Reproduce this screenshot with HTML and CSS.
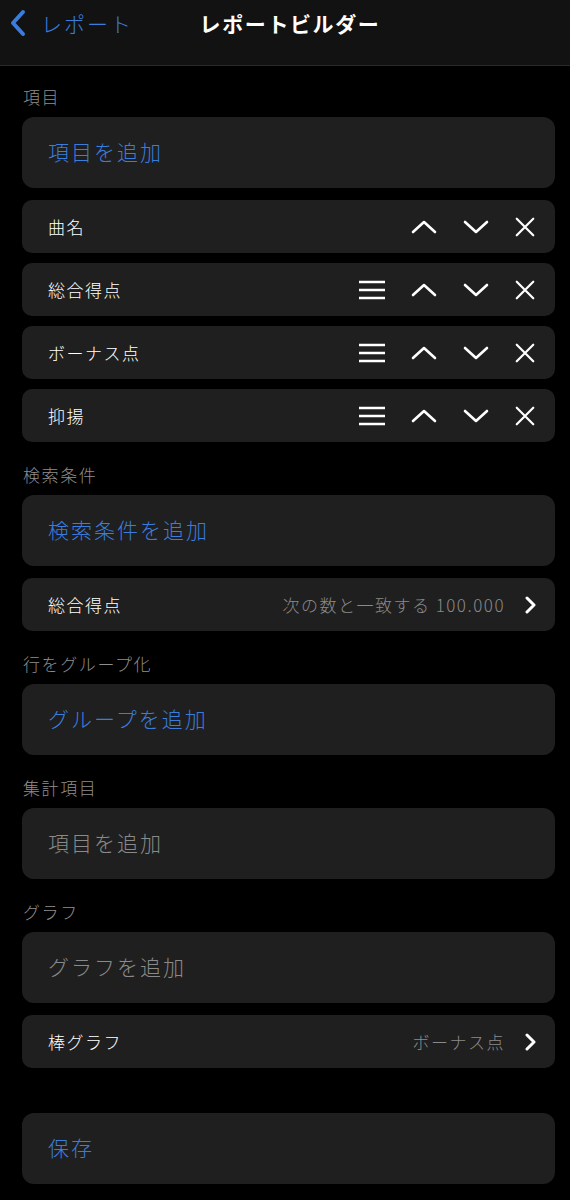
FILE: index.html
```html
<!DOCTYPE html>
<html lang="ja">
<head>
<meta charset="UTF-8">
<meta name="viewport" content="width=device-width, initial-scale=1.0">
<title>レポートビルダー</title>
<link rel="stylesheet" href="styles.css">
</head>
<body>
    <header class="nav">
        <a href="#" class="back">
            <svg width="16" height="28" viewBox="0 0 16 28"><polyline points="13,3 3,14 13,25" fill="none" stroke="currentColor" stroke-width="4" stroke-linecap="round" stroke-linejoin="round"/></svg>
            <span>レポート</span>
        </a>
        <h1>レポートビルダー</h1>
        <div></div>
    </header>

    <main class="content">
        <section class="section">
            <h2>項目</h2>
            <div class="card action">項目を追加</div>
            <div class="rows">
                <div class="row">
                    <span class="label">曲名</span>
                    <div class="tools">
                        <svg class="ico" width="28" height="16" viewBox="0 0 28 16"><polyline points="3,13 14,3 25,13"/></svg>
                        <svg class="ico" width="28" height="16" viewBox="0 0 28 16"><polyline points="3,3 14,13 25,3"/></svg>
                        <svg class="ico close" width="24" height="24" viewBox="0 0 24 24"><path d="M3 3 L21 21 M21 3 L3 21"/></svg>
                    </div>
                </div>
                <div class="row">
                    <span class="label">総合得点</span>
                    <div class="tools">
                        <svg class="ico menu" width="28" height="20" viewBox="0 0 28 20"><path d="M1 2 H27 M1 10 H27 M1 18 H27"/></svg>
                        <svg class="ico" width="28" height="16" viewBox="0 0 28 16"><polyline points="3,13 14,3 25,13"/></svg>
                        <svg class="ico" width="28" height="16" viewBox="0 0 28 16"><polyline points="3,3 14,13 25,3"/></svg>
                        <svg class="ico close" width="24" height="24" viewBox="0 0 24 24"><path d="M3 3 L21 21 M21 3 L3 21"/></svg>
                    </div>
                </div>
                <div class="row">
                    <span class="label">ボーナス点</span>
                    <div class="tools">
                        <svg class="ico menu" width="28" height="20" viewBox="0 0 28 20"><path d="M1 2 H27 M1 10 H27 M1 18 H27"/></svg>
                        <svg class="ico" width="28" height="16" viewBox="0 0 28 16"><polyline points="3,13 14,3 25,13"/></svg>
                        <svg class="ico" width="28" height="16" viewBox="0 0 28 16"><polyline points="3,3 14,13 25,3"/></svg>
                        <svg class="ico close" width="24" height="24" viewBox="0 0 24 24"><path d="M3 3 L21 21 M21 3 L3 21"/></svg>
                    </div>
                </div>
                <div class="row">
                    <span class="label">抑揚</span>
                    <div class="tools">
                        <svg class="ico menu" width="28" height="20" viewBox="0 0 28 20"><path d="M1 2 H27 M1 10 H27 M1 18 H27"/></svg>
                        <svg class="ico" width="28" height="16" viewBox="0 0 28 16"><polyline points="3,13 14,3 25,13"/></svg>
                        <svg class="ico" width="28" height="16" viewBox="0 0 28 16"><polyline points="3,3 14,13 25,3"/></svg>
                        <svg class="ico close" width="24" height="24" viewBox="0 0 24 24"><path d="M3 3 L21 21 M21 3 L3 21"/></svg>
                    </div>
                </div>
            </div>
        </section>

        <section class="section">
            <h2>検索条件</h2>
            <div class="card action">検索条件を追加</div>
            <div class="rows">
                <div class="row">
                    <span class="label">総合得点</span>
                    <span class="value">次の数と一致する 100.000</span>
                    <svg class="chev" width="12" height="18" viewBox="0 0 12 18"><polyline points="3,2 10,9 3,16"/></svg>
                </div>
            </div>
        </section>

        <section class="section">
            <h2>行をグループ化</h2>
            <div class="card action">グループを追加</div>
        </section>

        <section class="section">
            <h2>集計項目</h2>
            <div class="card action disabled">項目を追加</div>
        </section>

        <section class="section">
            <h2>グラフ</h2>
            <div class="card action disabled">グラフを追加</div>
            <div class="rows">
                <div class="row">
                    <span class="label">棒グラフ</span>
                    <span class="value">ボーナス点</span>
                    <svg class="chev" width="12" height="18" viewBox="0 0 12 18"><polyline points="3,2 10,9 3,16"/></svg>
                </div>
            </div>
        </section>

        <section class="section save">
            <div class="card action">保存</div>
        </section>
    </main>
</body>
</html>
```

FILE: styles.css
```css
/* Basic styling */
body {
    margin: 0;
    padding: 0;
    background-color: #000;
    color: #fff;
    font-family: "Noto Sans CJK JP", "Noto Sans", sans-serif;
    font-weight: 300;
}

.nav {
    height: 66px;
    box-sizing: border-box;
    padding-top: 7px;
    background-color: #121212;
    border-bottom: 1px solid #2a2a2a;
    display: grid;
    grid-template-columns: 1fr auto 1fr;
    align-items: start;
}
.back {
    display: flex;
    align-items: center;
    gap: 15px;
    padding-left: 10px;
    height: 32px;
    color: #3b7ddc;
    text-decoration: none;
    font-size: 21px;
    letter-spacing: 2px;
}
.nav h1 {
    margin: 0 0 0 10px;
    height: 32px;
    line-height: 32px;
    font-size: 21px;
    font-weight: bold;
    letter-spacing: 1.6px;
}

.content {
    padding: 0 15px 40px 22px;
}
.section {
    margin-top: 19px;
}
.section + .section {
    margin-top: 21px;
}
.section.save {
    margin-top: 45px;
}
.section h2 {
    margin: 0 0 8px 1px;
    height: 24px;
    line-height: 24px;
    font-size: 17px;
    font-weight: 300;
    letter-spacing: 1.6px;
    color: #8e8e8e;
}

.card {
    background-color: #1f1f1f;
    border-radius: 12px;
}
.action {
    height: 71px;
    box-sizing: border-box;
    padding: 0 0 4px 26px;
    display: flex;
    align-items: center;
    font-size: 21px;
    letter-spacing: 2px;
    color: #3b7ddc;
}
.action.disabled {
    color: #8a8a8a;
}

.rows {
    margin-top: 12px;
    display: flex;
    flex-direction: column;
    gap: 10px;
}
.row {
    height: 53px;
    display: flex;
    align-items: center;
    padding: 0 19px 0 26px;
    background-color: #1f1f1f;
    border-radius: 10px;
}
.label {
    flex: 1;
    font-size: 17px;
    letter-spacing: 1.5px;
}
.value {
    font-size: 17px;
    letter-spacing: 1.5px;
    color: #8a8a8a;
    margin-right: 19px;
}

.tools {
    display: flex;
    align-items: center;
    gap: 24px;
}
.ico {
    fill: none;
    stroke: #fff;
    stroke-width: 2.6;
    stroke-linecap: round;
    stroke-linejoin: round;
}
.ico.menu {
    stroke-width: 2.4;
    stroke-linecap: butt;
}
.ico.close {
    width: 22px;
    height: 22px;
    stroke-width: 2.4;
    margin-left: 0;
}
.chev {
    fill: none;
    stroke: #fff;
    stroke-width: 3;
    stroke-linecap: round;
    stroke-linejoin: round;
}
```
